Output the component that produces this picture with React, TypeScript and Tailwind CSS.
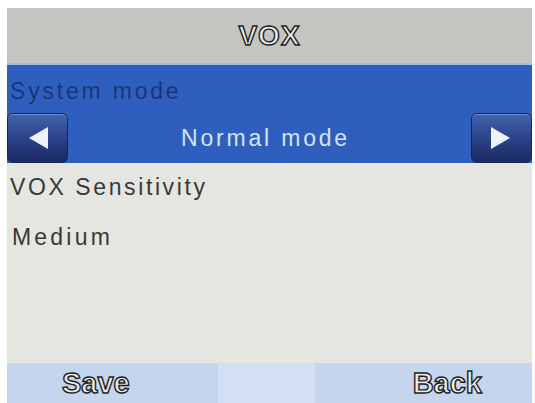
const ArrowButton = ({ dir }: { dir: "left" | "right" }) => (
  <div className="w-[61px] h-[50px] rounded-[6px] border border-[#1b2550] bg-gradient-to-b from-[#4263ab] via-[#2b4389] to-[#1b2a62] flex items-center justify-center shadow-[inset_0_1px_0_#6f8ccc]">
    <svg width="26" height="28" viewBox="0 0 26 28">
      {dir === "left" ? (
        <polygon points="23,3 23,25 4,14" fill="#eef2fa" />
      ) : (
        <polygon points="3,3 3,25 22,14" fill="#eef2fa" />
      )}
    </svg>
  </div>
);

export default function App() {
  return (
    <div className="w-[535px] h-[403px] bg-white pt-[8px] pl-[7px] pr-[3px] font-['Liberation_Sans',Arial,sans-serif] overflow-hidden">
      <div className="flex flex-col h-[395px]">
        <div className="h-[57px] bg-[#c4c4c0] border-b-2 border-[#a7bbdc] flex items-center justify-center">
          <span className="text-[28px] font-bold tracking-[1px] text-[#ececec] [-webkit-text-stroke:1.4px_#1e1e1e] leading-none">
            VOX
          </span>
        </div>
        <div className="bg-[#2f5fbe] h-[98px] flex flex-col">
          <div className="h-[48px] flex items-center pl-[3px] pt-[4px]">
            <span className="text-[23px] tracking-[2.8px] text-[#1b3678] leading-none">
              System mode
            </span>
          </div>
          <div className="h-[50px] flex items-center justify-between">
            <ArrowButton dir="left" />
            <span className="text-[23px] tracking-[2.8px] text-[#d2e4f7] leading-none pr-[8px]">
              Normal mode
            </span>
            <ArrowButton dir="right" />
          </div>
        </div>
        <div className="flex-1 bg-[#e6e6e1] flex flex-col text-[#383838]">
          <div className="h-[48px] flex items-center pl-[3px]">
            <span className="text-[23px] tracking-[2.6px] leading-none">
              VOX Sensitivity
            </span>
          </div>
          <div className="h-[52px] flex items-center pl-[5px]">
            <span className="text-[23px] tracking-[3.2px] leading-none">
              Medium
            </span>
          </div>
        </div>
        <div className="h-[40px] bg-[#c6d5ee] flex items-center">
          <div className="w-[211px] flex justify-start pl-[55px]">
            <span className="text-[29px] font-bold text-[#ececec] [-webkit-text-stroke:1.4px_#1e1e1e] leading-none">
              Save
            </span>
          </div>
          <div className="w-[97px] h-full bg-[#d3dff3]"></div>
          <div className="flex-1 flex justify-end pr-[50px]">
            <span className="text-[29px] font-bold text-[#ececec] [-webkit-text-stroke:1.4px_#1e1e1e] leading-none">
              Back
            </span>
          </div>
        </div>
      </div>
    </div>
  );
}
